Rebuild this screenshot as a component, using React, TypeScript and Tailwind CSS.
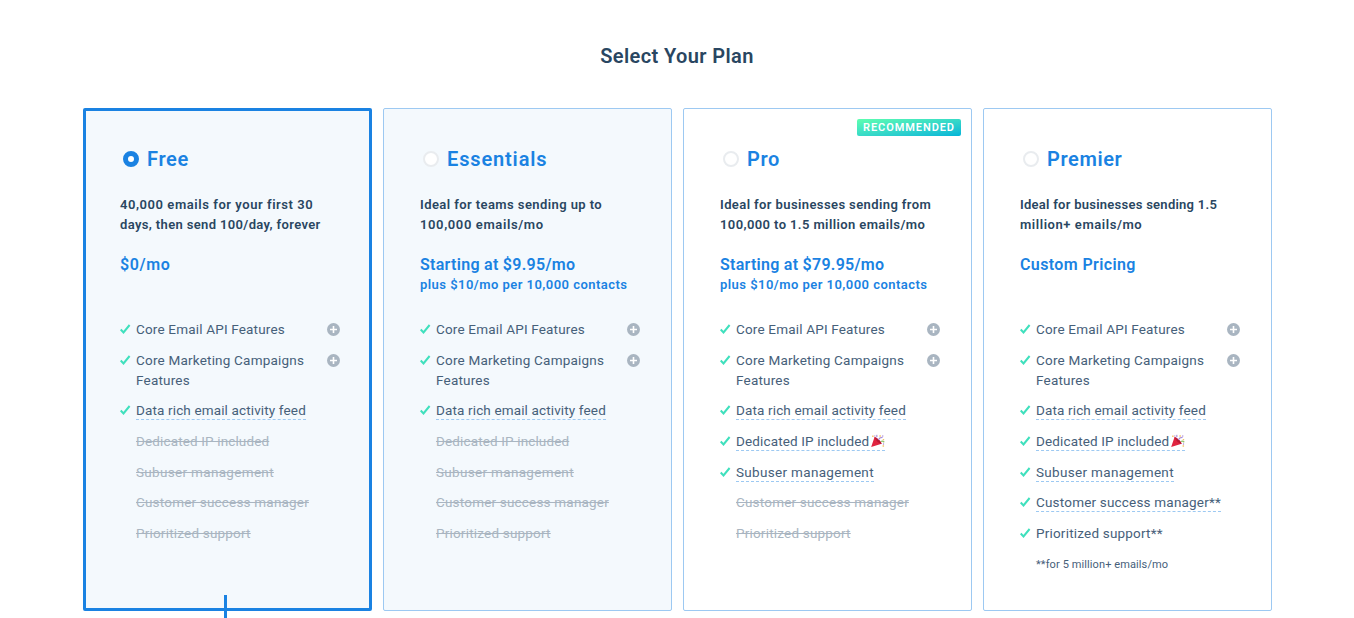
import React from 'react';

type Feature = { text: string; track: string; on?: boolean; plus?: boolean; dashed?: boolean; party?: boolean };
type Line = { text: string; track: string };
type Plan = {
  name: Line;
  desc: Line[];
  price: Line;
  extra?: string;
  selected?: boolean;
  tinted?: boolean;
  recommended?: boolean;
  features: Feature[];
  note?: string;
};

const core: Feature[] = [
  { text: 'Core Email API Features', track: 'tracking-[0.18px]', on: true, plus: true },
  { text: 'Core Marketing Campaigns Features', track: 'tracking-[0.2px]', on: true, plus: true },
  { text: 'Data rich email activity feed', track: 'tracking-[0.14px]', on: true, dashed: true },
];

const dedicated: Feature = { text: 'Dedicated IP included', track: 'tracking-[0.14px]' };
const subuser: Feature = { text: 'Subuser management', track: 'tracking-[0.32px]' };
const success: Feature = { text: 'Customer success manager', track: 'tracking-[0.19px]' };
const support: Feature = { text: 'Prioritized support', track: 'tracking-[0.2px]' };

const basic: Feature[] = [...core, dedicated, subuser, success, support];

const plans: Plan[] = [
  {
    name: { text: 'Free', track: 'tracking-[0.65px]' },
    desc: [
      { text: '40,000 emails for your first 30', track: 'tracking-[0.56px]' },
      { text: 'days, then send 100/day, forever', track: 'tracking-[0.36px]' },
    ],
    price: { text: '$0/mo', track: 'tracking-[0.65px]' },
    selected: true,
    tinted: true,
    features: basic,
  },
  {
    name: { text: 'Essentials', track: 'tracking-[0.85px]' },
    desc: [
      { text: 'Ideal for teams sending up to', track: 'tracking-[0.42px]' },
      { text: '100,000 emails/mo', track: 'tracking-[0.62px]' },
    ],
    price: { text: 'Starting at $9.95/mo', track: 'tracking-[0.29px]' },
    extra: 'plus $10/mo per 10,000 contacts',
    tinted: true,
    features: basic,
  },
  {
    name: { text: 'Pro', track: 'tracking-[0.6px]' },
    desc: [
      { text: 'Ideal for businesses sending from', track: 'tracking-[0.4px]' },
      { text: '100,000 to 1.5 million emails/mo', track: 'tracking-[0.4px]' },
    ],
    price: { text: 'Starting at $79.95/mo', track: 'tracking-[0.27px]' },
    extra: 'plus $10/mo per 10,000 contacts',
    recommended: true,
    features: [
      ...core,
      { ...dedicated, on: true, dashed: true, party: true },
      { ...subuser, on: true, dashed: true },
      success,
      support,
    ],
  },
  {
    name: { text: 'Premier', track: 'tracking-[0.6px]' },
    desc: [
      { text: 'Ideal for businesses sending 1.5', track: 'tracking-[0.26px]' },
      { text: 'million+ emails/mo', track: 'tracking-[0.56px]' },
    ],
    price: { text: 'Custom Pricing', track: 'tracking-[0.38px]' },
    features: [
      ...core,
      { ...dedicated, on: true, dashed: true, party: true },
      { ...subuser, on: true, dashed: true },
      { ...success, text: 'Customer success manager**', on: true, dashed: true },
      { ...support, text: 'Prioritized support**', on: true },
    ],
    note: '**for 5 million+ emails/mo',
  },
];

function Check() {
  return (
    <svg width="11" height="10" viewBox="0 0 11 10" fill="none" className="mt-[5px] block">
      <path d="M0.7 5.5 L3.5 8.5 L9.6 1" stroke="#3fe0bd" strokeWidth="2" />
    </svg>
  );
}

function Plus() {
  return (
    <svg width="13" height="13" viewBox="0 0 13 13" className="mt-1 block">
      <circle cx="6.5" cy="6.5" r="6.5" fill="#a9b5c1" />
      <path d="M6.5 3v7M3 6.5h7" stroke="#fff" strokeWidth="1.6" />
    </svg>
  );
}

function Party() {
  return (
    <svg width="14" height="14" viewBox="0 0 15 14" className="ml-[2px] inline-block align-[-2px]">
      <path d="M0.2 13.4 L3.8 2.6 C7 3.6 11 7.6 11.4 10 Z" fill="#e0243f" />
      <path d="M3.8 2.6 C7 3.6 11 7.6 11.4 10 C8.4 9.6 4.6 6 3.8 2.6 Z" fill="#b81a35" />
      <path d="M8 5.6 C8.8 3.7 10.2 3 12.4 3.2" stroke="#aa8dd8" strokeWidth="1.3" fill="none" />
      <path d="M5.8 3.2 C6.8 2.3 6.6 1.4 6 .4" stroke="#aa8dd8" strokeWidth="1.2" fill="none" />
      <path d="M10.6 7.6 C12 6.8 13.2 7.3 14.2 8.3" stroke="#8fc46e" strokeWidth="1.3" fill="none" />
      <path d="M1.2 1h1.6v1.6h-1.6zM9 .8h1.6v1.6h-1.6zM12.6 4.8h1.5v1.5h-1.5zM12.4 11.6h1.6v1.6h-1.6z" fill="#f5c56b" />
      <path d="M3.6 1.2h1v1h-1zM12 1h1.2v1.2h-1.2zM12.8 9.6h1.2v1.2h-1.2z" fill="#9266cc" />
    </svg>
  );
}

function PlanCard({ plan }: { plan: Plan }) {
  return (
    <section
      className={`relative h-[503px] w-[289px] rounded-[2px] ${
        plan.selected ? 'border-[3px] border-[#1a82e2] px-[34px] pt-[38px]' : 'border border-[#9dc9f2] px-9 pt-10'
      } ${plan.tinted ? 'bg-[#f4f9fd]' : 'bg-white'}`}
    >
      {plan.recommended && (
        <span className="absolute top-[10px] right-[10px] h-[17px] w-[104px] rounded-[2px] bg-linear-to-br from-[#5effaf] to-[#00b4d8] pl-[6px] text-[11px] leading-[17px] font-semibold tracking-[0.93px] whitespace-nowrap text-white">
          RECOMMENDED
        </span>
      )}
      <div className="flex h-5 items-center gap-2 pl-[3px]">
        <span
          className={`h-4 w-4 rounded-full bg-white ${plan.selected ? 'border-[5px] border-[#1a82e2]' : 'border-2 border-[#e9ecef]'}`}
        />
        <h2 className={`text-[20px] leading-5 font-semibold text-[#1a82e2] ${plan.name.track}`}>{plan.name.text}</h2>
      </div>
      <div className="mt-[26px] text-[13px] leading-5 font-semibold whitespace-nowrap text-[#294661]">
        {plan.desc.map((line) => (
          <p key={line.text} className={line.track}>
            {line.text}
          </p>
        ))}
      </div>
      <div className="mt-5 h-10 whitespace-nowrap text-[#1a82e2]">
        <p className={`text-[16px] leading-5 font-semibold ${plan.price.track}`}>{plan.price.text}</p>
        {plan.extra && <p className="text-[13px] leading-5 font-semibold tracking-[0.46px]">{plan.extra}</p>}
      </div>
      <ul className="mt-6 flex w-[220px] flex-col gap-[10.67px] text-[13.5px] leading-5">
        {plan.features.map((f) => (
          <li key={f.text} className="flex">
            <span className="w-4 shrink-0">{f.on && <Check />}</span>
            <span
              className={`w-[180px] ${f.track} ${f.text.length > 30 ? '' : 'whitespace-nowrap'} ${
                f.on ? 'text-[#46607a]' : 'text-[#a9b5c1] line-through'
              }`}
            >
              <span className={f.dashed ? 'border-b border-dashed border-[#9dc9f2] pb-px' : ''}>
                {f.text}
                {f.party && <Party />}
              </span>
            </span>
            {f.plus && (
              <span className="ml-auto">
                <Plus />
              </span>
            )}
          </li>
        ))}
        {plan.note && <li className="pt-px pl-4 text-[11px] tracking-[0.1px] text-[#46607a]">{plan.note}</li>}
      </ul>
      {plan.selected && <span className="absolute top-[484px] left-[138px] h-6 w-[3px] bg-[#1a82e2]" />}
    </section>
  );
}

export default function App() {
  return (
    <main className="h-[618px] overflow-hidden bg-white pt-[44px] font-['Roboto','Liberation_Sans',sans-serif]">
      <h1 className="text-center text-[20px] leading-6 font-semibold tracking-[0.4px] text-[#294661]">Select Your Plan</h1>
      <div className="mt-10 flex gap-[11px] pl-[83px]">
        {plans.map((p) => (
          <PlanCard key={p.name.text} plan={p} />
        ))}
      </div>
    </main>
  );
}
